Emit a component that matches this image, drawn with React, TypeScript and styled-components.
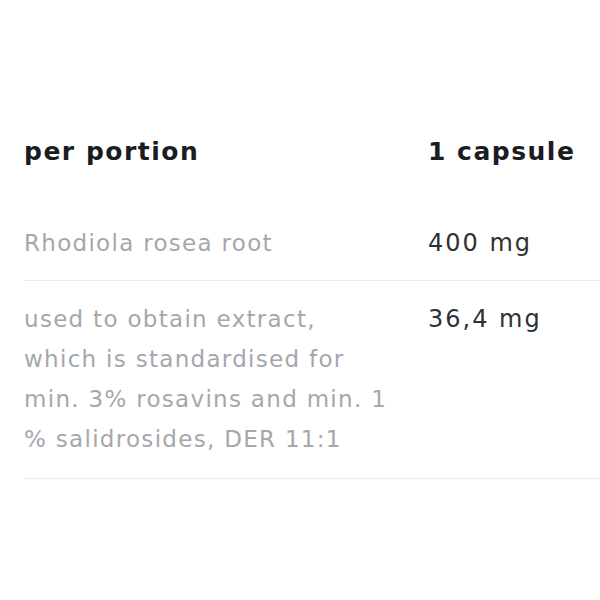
import styled, { createGlobalStyle } from "styled-components";

const GlobalStyle = createGlobalStyle`
  html, body {
    margin: 0;
    padding: 0;
    background: #ffffff;
  }
  body {
    font-family: "DejaVu Sans", "Liberation Sans", sans-serif;
  }
`;

const Page = styled.div`
  width: 600px;
  height: 600px;
  overflow: hidden;
  padding: 132px 0 0 24px;
  box-sizing: border-box;
`;

const Table = styled.div`
  display: grid;
  grid-template-columns: 404px 1fr;
`;

const HeadCell = styled.div`
  font-size: 25px;
  line-height: 40px;
  font-weight: 700;
  letter-spacing: 1.5px;
  color: #1b1c22;
  padding-bottom: 51px;
`;

const Row = styled.div`
  display: contents;
`;

const Cell = styled.div<{ $muted?: boolean }>`
  font-size: ${p => (p.$muted ? "23px" : "24px")};
  line-height: 40px;
  letter-spacing: ${p => (p.$muted ? "1.3px" : "2px")};
  color: ${p => (p.$muted ? "#a4a7ac" : "#2f3034")};
  padding: 0 0 17px;
  border-bottom: 1px solid #ececec;
  white-space: nowrap;
`;

const SpacedCell = styled(Cell)`
  padding-top: 18px;
  padding-bottom: 19px;
`;

export default function App() {
  return (
    <>
      <GlobalStyle />
      <Page>
        <Table>
          <HeadCell>per portion</HeadCell>
          <HeadCell>1 capsule</HeadCell>
          <Row>
            <Cell $muted>Rhodiola rosea root</Cell>
            <Cell>400 mg</Cell>
          </Row>
          <Row>
            <SpacedCell $muted>
              used to obtain extract,
              <br />
              which is standardised for
              <br />
              min. 3% rosavins and min. 1
              <br />% salidrosides, DER 11:1
            </SpacedCell>
            <SpacedCell>36,4 mg</SpacedCell>
          </Row>
        </Table>
      </Page>
    </>
  );
}
